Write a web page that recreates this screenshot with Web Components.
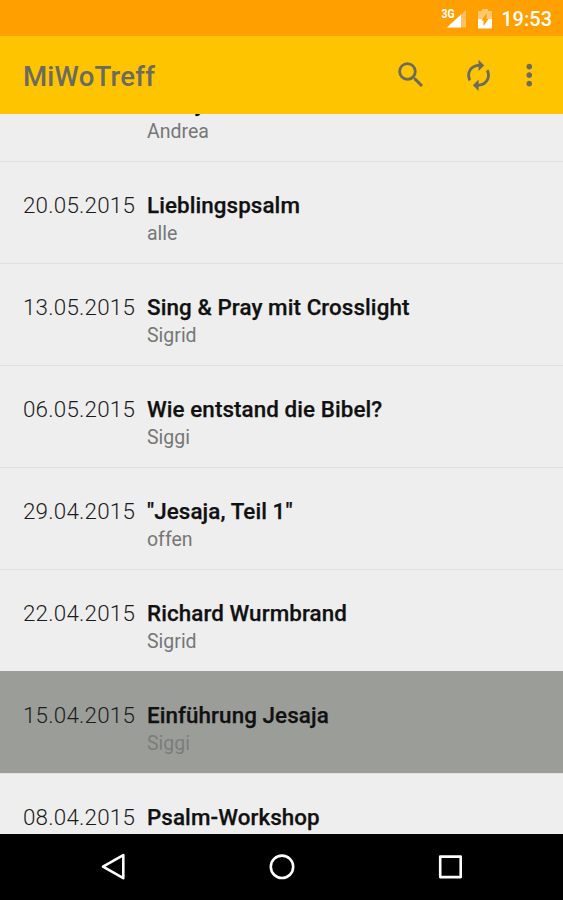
<!DOCTYPE html>
<html lang="de"><head><meta charset="utf-8"><title>MiWoTreff</title>
<style>html,body{margin:0;height:100%;background:#000;font-family:Roboto,sans-serif}</style></head>
<body>
<miwo-app>
  <status-bar slot="status">19:53</status-bar>
  <app-bar slot="bar">MiWoTreff</app-bar>
  <event-row><span slot="date">27.05.2015</span><span slot="title">Derby i,</span><span slot="author">Andrea</span></event-row>
  <event-row><span slot="date">20.05.2015</span><span slot="title">Lieblingspsalm</span><span slot="author">alle</span></event-row>
  <event-row><span slot="date">13.05.2015</span><span slot="title">Sing &amp; Pray mit Crosslight</span><span slot="author">Sigrid</span></event-row>
  <event-row><span slot="date">06.05.2015</span><span slot="title">Wie entstand die Bibel?</span><span slot="author">Siggi</span></event-row>
  <event-row><span slot="date">29.04.2015</span><span slot="title">"Jesaja, Teil 1"</span><span slot="author">offen</span></event-row>
  <event-row><span slot="date">22.04.2015</span><span slot="title">Richard Wurmbrand</span><span slot="author">Sigrid</span></event-row>
  <event-row selected><span slot="date">15.04.2015</span><span slot="title">Einführung Jesaja</span><span slot="author">Siggi</span></event-row>
  <event-row><span slot="date">08.04.2015</span><span slot="title">Psalm-Workshop</span></event-row>
  <nav-bar slot="nav"></nav-bar>
</miwo-app>
<script>
const define = (name, html) => customElements.define(name, class extends HTMLElement {
  constructor() { super(); this.attachShadow({ mode: 'open' }).innerHTML = html; }
});

define('miwo-app', `<style>
:host{display:flex;flex-direction:column;width:563px;height:900px;overflow:hidden;background:#eee}
main{flex:1;min-height:0;overflow:hidden}
.scroll{margin-top:-54px}
</style><slot name="status"></slot><slot name="bar"></slot><main><div class="scroll"><slot></slot></div></main><slot name="nav"></slot>`);

define('status-bar', `<style>
:host{display:flex;flex:none;height:36px;box-sizing:border-box;background:#ffa000;color:#fff;justify-content:flex-end;align-items:center;padding:2px 11px 0 0;font:500 20px/24px Roboto,sans-serif}
svg{display:block}.sig{margin-right:11px}.bat{margin-right:9px}
</style>
<svg class="sig" width="26" height="24" viewBox="0 0 26 24"><path d="M25 3v17.500H6z" fill="#ffc060"/><path d="M20 7.500v13H6z" fill="#fff"/><text x="0.500" y="10.800" font-family="Roboto" font-weight="700" font-size="13" fill="#fff" textLength="13" lengthAdjust="spacingAndGlyphs">3G</text></svg>
<svg class="bat" width="14" height="22" viewBox="0 0 14 22"><path d="M4 1h6v2h4v8H0V3h4z" fill="#ffc970"/><path d="M0 11h14v9.500H0z" fill="#fff"/><path d="M8.500 5v6H10.500l-5 7v-5.500H3.500z" fill="#ffa000"/></svg>
<slot></slot>`);

define('app-bar', `<style>
:host{display:flex;flex:none;height:78px;box-sizing:border-box;background:#ffc400;color:#6c6b60;align-items:center;padding:2px 19px 0 23px;font:500 27.600px/32px Roboto,sans-serif;letter-spacing:.2px}
.t{flex:1;padding-top:1px}svg{display:block;fill:#6c6b60}
</style><span class="t"><slot></slot></span>
<svg width="34" height="34" viewBox="0 0 24 24" style="margin-right:33px"><path d="M15.500 14h-.79l-.28-.27A6.471 6.471 0 0 0 16 9.500 6.500 6.500 0 1 0 9.500 16c1.610 0 3.090-.59 4.230-1.570l.27.28v.79l5 4.990L20.490 19l-4.990-5zm-6 0C7.010 14 5 11.990 5 9.500S7.010 5 9.500 5 14 7.010 14 9.500 11.990 14 9.500 14z" transform="translate(0 -.7)"/></svg>
<svg width="34" height="34" viewBox="0 0 24 24" style="margin-right:17px"><path d="M12 6v3l4-4-4-4v3c-4.420 0-8 3.580-8 8 0 1.570.46 3.030 1.240 4.260L6.700 14.800A5.870 5.870 0 0 1 6 12c0-3.310 2.690-6 6-6zm6.760 1.740L17.300 9.200c.44.84.7 1.790.7 2.800 0 3.310-2.690 6-6 6v-3l-4 4 4 4v-3c4.420 0 8-3.580 8-8 0-1.570-.46-3.030-1.240-4.260z" transform="translate(.4 -.5)"/></svg>
<svg width="34" height="34" viewBox="0 0 24 24" style="margin-right:-2px"><path d="M12 8c1.100 0 2-.9 2-2s-.9-2-2-2-2 .9-2 2 .9 2 2 2zm0 2c-1.100 0-2 .9-2 2s.9 2 2 2 2-.9 2-2-.9-2-2-2zm0 6c-1.100 0-2 .9-2 2s.9 2 2 2 2-.9 2-2-.9-2-2-2z" transform="translate(.2 -.6)"/></svg>`);

define('event-row', `<style>
:host{display:grid;grid-template-columns:124px 1fr;grid-template-rows:30px 26px;align-content:start;height:102px;box-sizing:border-box;padding:28px 23px 0;border-bottom:1px solid #e0e0e0;white-space:nowrap;color:#111}
:host([selected]){background:#9b9d99;background-clip:padding-box;box-shadow:0 -1px #9b9d99}
.d{font:300 22.400px/30px Roboto,sans-serif;color:#1c1c1c;letter-spacing:.2px}
.t{font:500 22.400px/30px Roboto,sans-serif;letter-spacing:.08px;-webkit-text-stroke:.25px}
.a{grid-column:2;font:400 19.500px/26px Roboto,sans-serif;color:#777;padding-top:1px}
:host([selected]) .a{color:#7b7d7a}
</style><div class="d"><slot name="date"></slot></div><div class="t"><slot name="title"></slot></div><div class="a"><slot name="author"></slot></div>`);

define('nav-bar', `<style>
:host{display:flex;flex:none;height:66px;background:#000;justify-content:center;align-items:center;gap:140px}
svg{display:block;fill:none;stroke:#fff;stroke-width:2.600;stroke-linejoin:round}
</style>
<svg width="28" height="28" viewBox="0 0 28 28"><path d="M23.300 2.200v23L3 13.700z"/></svg>
<svg width="28" height="28" viewBox="0 0 28 28"><circle cx="14" cy="13.800" r="11.200"/></svg>
<svg width="28" height="28" viewBox="0 0 28 28"><rect x="4.200" y="3.600" width="20.500" height="20.500"/></svg>`);
</script></body></html>
